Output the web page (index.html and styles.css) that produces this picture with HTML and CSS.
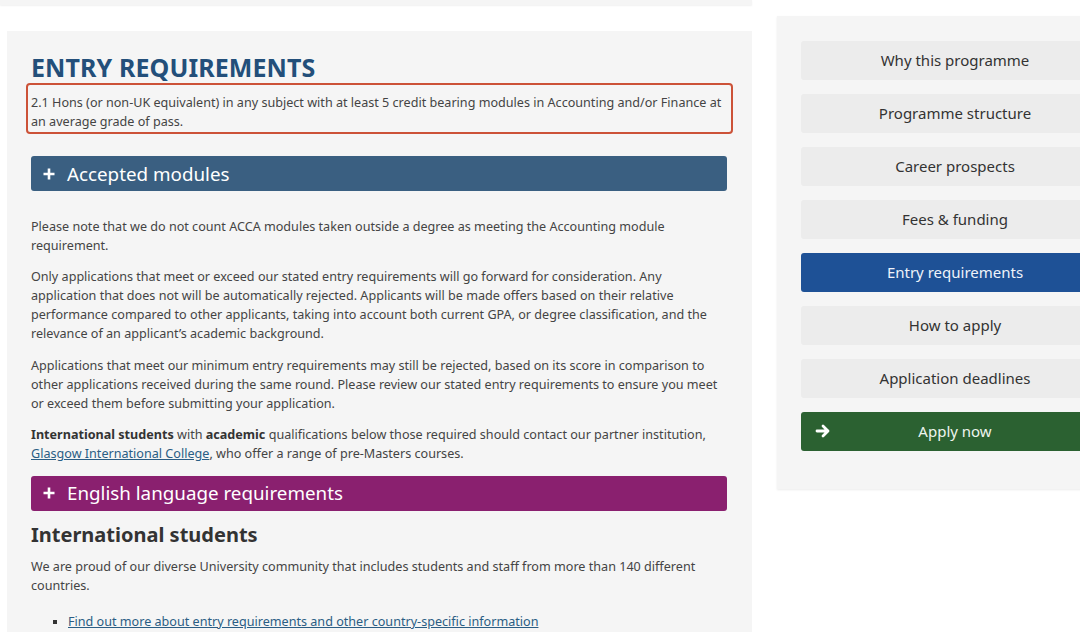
FILE: index.html
```html
<!DOCTYPE html>
<html>
<head>
  <title>Entry requirements</title>
  <link rel="stylesheet" href="styles.css">
</head>
<body>
  <div class="page">
    <div class="main">
      <div class="top-strip"></div>

      <div class="panel">
        <h1>ENTRY REQUIREMENTS</h1>
        <p class="highlight">2.1 Hons (or non-UK equivalent) in any subject with at least 5 credit bearing modules in Accounting and/or Finance at an average grade of pass.</p>

        <div class="bar bar-blue">
          <svg class="plus" width="12" height="12" viewBox="0 0 12 12"><path d="M6 0.5v11M0.5 6h11" stroke="#fff" stroke-width="2.6"/></svg>
          <span>Accepted modules</span>
        </div>

        <p>Please note that we do not count ACCA modules taken outside a degree as meeting the Accounting module requirement.</p>
        <p>Only applications that meet or exceed our stated entry requirements will go forward for consideration. Any application that does not will be automatically rejected. Applicants will be made offers based on their relative performance compared to other applicants, taking into account both current GPA, or degree classification, and the relevance of an applicant’s academic background.</p>
        <p>Applications that meet our minimum entry requirements may still be rejected, based on its score in comparison to other applications received during the same round. Please review our stated entry requirements to ensure you meet or exceed them before submitting your application.</p>
        <p><strong>International students</strong> with <strong>academic</strong> qualifications below those required should contact our partner institution, <a href="#">Glasgow International College</a>, who offer a range of pre-Masters courses.</p>

        <div class="bar bar-purple">
          <svg class="plus" width="12" height="12" viewBox="0 0 12 12"><path d="M6 0.5v11M0.5 6h11" stroke="#fff" stroke-width="2.6"/></svg>
          <span>English language requirements</span>
        </div>

        <h2>International students</h2>
        <p>We are proud of our diverse University community that includes students and staff from more than 140 different countries.</p>
        <ul class="links">
          <li><a href="#">Find out more about entry requirements and other country-specific information</a></li>
        </ul>
      </div>
    </div>

    <div class="sidebar">
      <a class="nav" href="#">Why this programme</a>
      <a class="nav" href="#">Programme structure</a>
      <a class="nav" href="#">Career prospects</a>
      <a class="nav" href="#">Fees &amp; funding</a>
      <a class="nav active" href="#">Entry requirements</a>
      <a class="nav" href="#">How to apply</a>
      <a class="nav" href="#">Application deadlines</a>
      <a class="nav apply" href="#">
        <svg class="arrow" width="16" height="14" viewBox="0 0 16 14"><path d="M2 7h11M8 2l5 5-5 5" fill="none" stroke="#fff" stroke-width="2.8" stroke-linecap="round" stroke-linejoin="round"/></svg>
        Apply now
      </a>
    </div>
  </div>
</body>
</html>
```

FILE: styles.css
```css
body {
  margin: 0;
  padding: 0;
  background: #fff;
  font-family: "Noto Sans", "Open Sans", sans-serif;
  color: #444;
  overflow: hidden;
}

.page {
  display: flex;
  align-items: flex-start;
  width: 1140px;
  padding-left: 7px;
}

.main {
  width: 745px;
  flex-shrink: 0;
}

.top-strip {
  height: 5px;
  margin-left: -7px;
  background: #f5f5f5;
  box-shadow: 0 1px 2px rgba(0,0,0,0.06);
}

.panel {
  margin-top: 26px;
  background: #f5f5f5;
  padding: 21px 25px 40px 24px;
  height: 700px;
}

h1 {
  margin: 0;
  font-size: 25px;
  font-weight: 700;
  color: #234f7a;
  line-height: 31px;
  letter-spacing: 0.1px;
}

p {
  margin: 0 0 12.3px;
  font-size: 12.6px;
  line-height: 19px;
}

.highlight {
  margin: 0 -6px 22px -5px;
  padding: 8px 4px 1px 3px;
  border: 2px solid #cc5238;
  border-radius: 4px;
}

.bar {
  display: flex;
  align-items: center;
  height: 35px;
  padding-left: 12px;
  border-radius: 3px;
  color: #fff;
  font-size: 18.8px;
}

.bar .plus {
  margin-right: 12px;
}

.bar-blue {
  background: #3a5f81;
  margin-bottom: 26px;
}

.bar-purple {
  background: #8a206f;
  margin-top: 13px;
  margin-bottom: 9px;
}

strong {
  color: #333;
}

a {
  color: #2a5d84;
}

h2 {
  margin: 0 0 7px;
  font-size: 20px;
  font-weight: 700;
  color: #333;
  line-height: 30px;
}

.links {
  margin: 17px 0 0;
  padding-left: 37px;
  font-size: 12.6px;
  line-height: 19px;
  list-style: square;
}

.links li::marker {
  color: #333;
}

.sidebar {
  margin-left: 25px;
  margin-top: 16px;
  width: 308px;
  flex-shrink: 0;
  background: #f5f5f5;
  padding: 25px 24px 38px;
  display: flex;
  flex-direction: column;
  gap: 14px;
  box-shadow: 0 1px 2px rgba(0,0,0,0.08);
}

.nav {
  position: relative;
  display: flex;
  align-items: center;
  justify-content: center;
  height: 39px;
  padding-bottom: 2px;
  box-sizing: border-box;
  background: #ececec;
  border-radius: 3px;
  color: #333;
  font-size: 15px;
  text-decoration: none;
}

.nav.active {
  background: #1e5196;
  color: #eef3fa;
}

.nav.apply {
  background: #2b6131;
  color: #eef5ee;
}

.arrow {
  position: absolute;
  left: 14px;
  top: 12px;
}
```
